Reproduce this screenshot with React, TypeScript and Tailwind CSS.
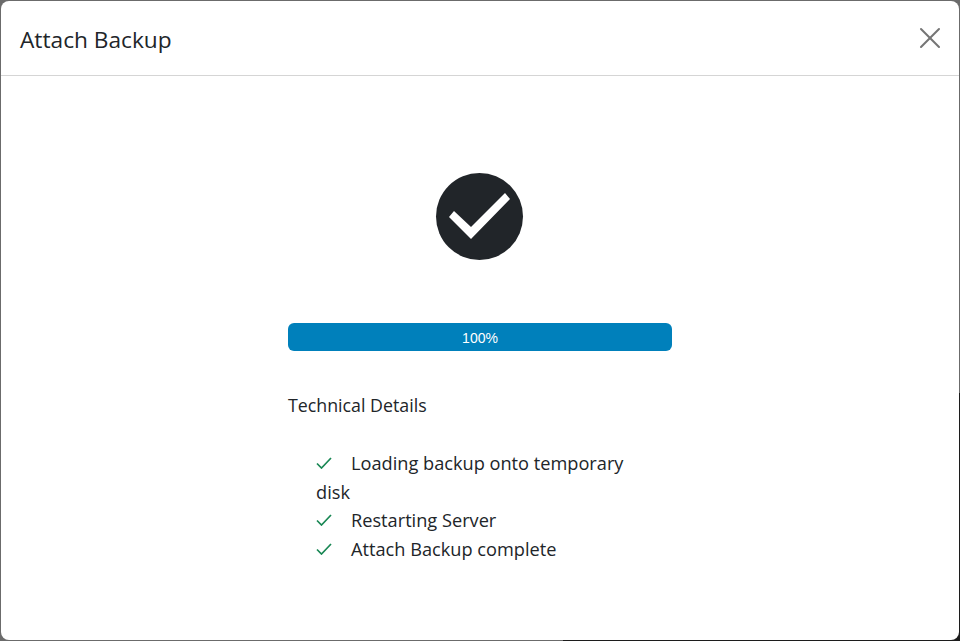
import { X } from "lucide-react";

const steps = ["Loading backup onto temporary disk", "Restarting Server", "Attach Backup complete"];

function StepCheck() {
  return (
    <svg viewBox="0 0 16 12" className="inline-block w-[16px] h-[12px] mr-[19px] align-[1px]" fill="none" stroke="#198754" strokeWidth="1.7">
      <path d="M1 6.5 5.5 11 15 1" />
    </svg>
  );
}

export default function App() {
  return (
    <div className="relative h-[641px] w-[960px] overflow-hidden bg-[#6b6b6b] font-['Open_Sans','Noto_Sans',sans-serif] text-[#212529]">
      {/* dark window showing through behind the modal */}
      <div className="absolute right-0 bottom-0 w-[397px] h-[248px] bg-[#1c1c1c]" />
      <div className="relative h-[639px] w-[958px] ml-px mt-px rounded-[8px] bg-white flex flex-col">
        <header className="h-[75px] shrink-0 border-b border-[#d5d5d5] flex items-center justify-between pl-[19px] pr-[11px]">
          <h1 className="text-[22.7px] leading-[28px] pt-[4px]">Attach Backup</h1>
          <X className="w-[36px] h-[36px] text-[#757575]" strokeWidth={1.35} />
        </header>
        <main className="flex-1 flex flex-col items-center pt-[97px]">
          <div className="w-[87px] h-[87px] rounded-full bg-[#212529] -translate-x-px">
            <svg viewBox="0 0 87 87" className="w-[87px] h-[87px]" fill="#fff">
              <polygon points="13,44 18,38 35,54 69,20 74,26 35,66" />
            </svg>
          </div>
          <div className="w-[384px] mt-[63px]">
            <div className="h-[28px] rounded-[6px] bg-[#0080bb] flex items-center justify-center text-white text-[14px] pt-[2px] font-['Liberation_Sans',sans-serif]">100%</div>
            <p className="mt-[40px] text-[17.8px] leading-[29px]">Technical Details</p>
            <ul className="mt-[28.8px] pl-[28px] pr-[40px] text-[18.2px] leading-[28.8px]">
              {steps.map((s) => (
                <li key={s}><StepCheck />{s}</li>
              ))}
            </ul>
          </div>
        </main>
      </div>
    </div>
  );
}
